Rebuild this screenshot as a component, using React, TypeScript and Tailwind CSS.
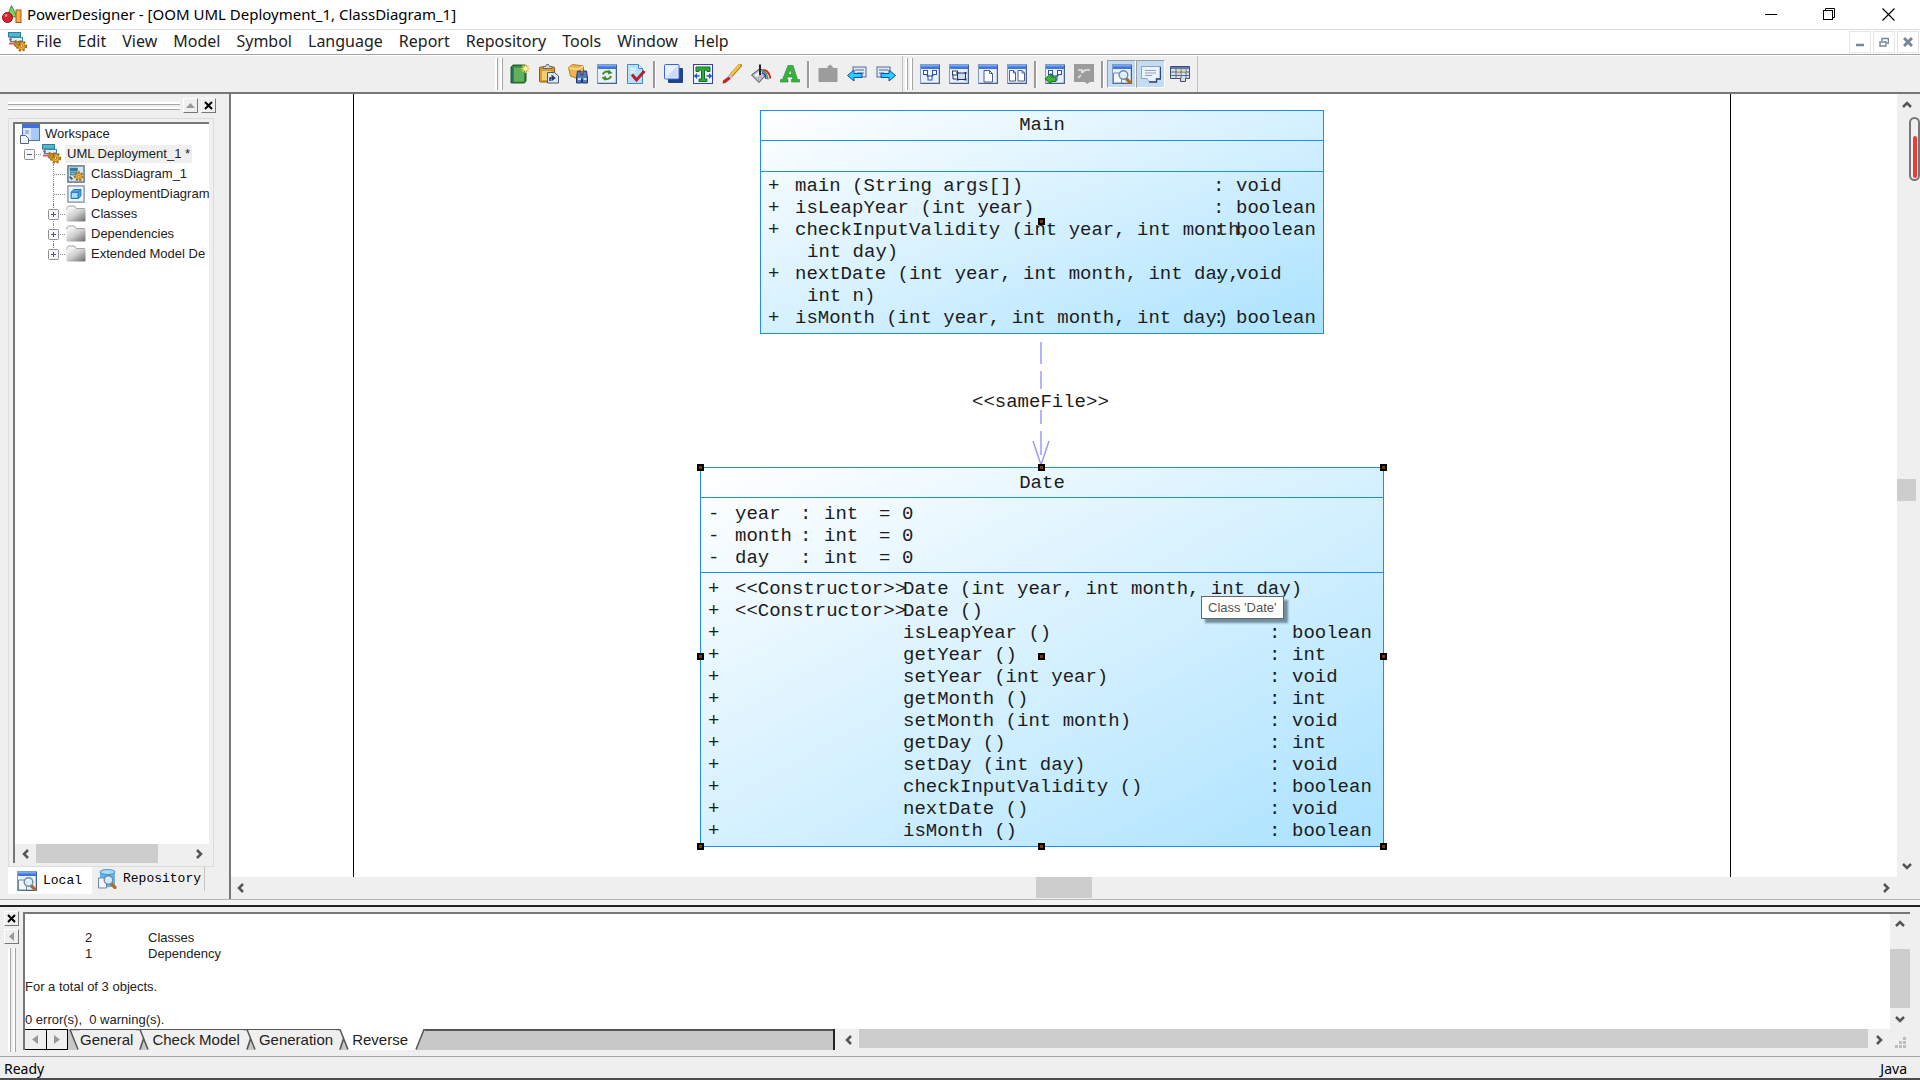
import type { ReactNode } from 'react';
import clsx from 'clsx';

/* ---------- icons ---------- */

function Svg({ size = 20, children }: { size?: number; children: ReactNode }) {
  return (
    <svg width={size} height={size} viewBox="0 0 20 20" className="shrink-0" aria-hidden="true">
      {children}
    </svg>
  );
}

function Win({ children }: { children?: ReactNode }) {
  return (
    <>
      <rect x="0.5" y="0.5" width="19" height="19" fill="#e8f1fb" stroke="#7f9cc9" />
      <path d="M19.5 1v18.5H1" fill="none" stroke="#46618f" strokeWidth="1.5" />
      <rect x="1" y="1" width="18" height="4" fill="#3f76e0" />
      <rect x="1" y="1" width="18" height="1.5" fill="#7ba6f2" />
      {children}
    </>
  );
}

const NODES = (
  <>
    <path d="M5.500 9l4 5M14.500 9l-4 5" stroke="#2d4fae" strokeWidth="1.500" fill="none" />
    <rect x="3.500" y="6.500" width="4" height="4" fill="#fff" stroke="#2d4fae" />
    <rect x="12.500" y="6.500" width="4" height="4" fill="#fff" stroke="#2d4fae" />
    <rect x="8" y="12" width="4" height="4" fill="#fff" stroke="#2d4fae" />
  </>
);

function LensShape() {
  return (
    <>
      <path d="M1.500 9h6l2 2v8h-8z" fill="#f4f8fd" stroke="#6d87ab" />
      <path d="M14 14.500l4 4" stroke="#b8691f" strokeWidth="3.200" strokeLinecap="round" />
      <circle cx="11.500" cy="11" r="4.300" fill="#dcefff" fillOpacity="0.9" stroke="#7489a8" strokeWidth="1.400" />
      <path d="M9.500 10a2.500 2.500 0 0 1 2-1.500" stroke="#fff" fill="none" />
    </>
  );
}

function GearShape({ cx, cy, r }: { cx: number; cy: number; r: number }) {
  return (
    <>
      <circle cx={cx} cy={cy} r={r} fill="none" stroke="#a86f12" strokeWidth="3" strokeDasharray="2 1.500" />
      <circle cx={cx} cy={cy} r={r - 0.5} fill="#f0b53c" stroke="#b97b18" />
      <circle cx={cx} cy={cy} r={r / 3} fill="#fdf6e0" stroke="#a86f12" />
    </>
  );
}

const icons: Record<string, ReactNode> = {
  app: (
    <>
      <path d="M9.500 0.5L15 12H5z" fill="#7ed06a" stroke="#3f8f35" />
      <circle cx="5.500" cy="12.500" r="5" fill="#d8232f" stroke="#8d1119" />
      <circle cx="4" cy="10.500" r="1.400" fill="#f58c90" />
      <rect x="14" y="5" width="5" height="12.500" fill="#f7b23b" stroke="#a3541c" />
    </>
  ),
  model: (
    <>
      <rect x="0.5" y="0.5" width="12" height="4.500" fill="#52b7cf" stroke="#2b7f99" />
      <rect x="2.500" y="5.500" width="12" height="4" fill="#d7f1f7" stroke="#3b8aa1" />
      <path d="M1 7.500h3M1 11.500h6" stroke="#d35a6c" strokeWidth="2" />
      <GearShape cx={13.5} cy={14} r={4.2} />
      <GearShape cx={9} cy={11.5} r={2.2} />
    </>
  ),
  newModel: (
    <>
      <path d="M1 3l2-2h13v16l-1.500 2H1z" fill="#33893a" stroke="#1c5a2a" />
      <path d="M4 3.500h10v14H4z" fill="#62b05b" />
      <path d="M2 3.500v15M15.500 4v14" stroke="#2a4f83" />
      <path d="M15.500 0v9M11 4.500h9M12.500 1.500l6 6M18.500 1.500l-6 6" stroke="#f6cf3f" strokeWidth="1.500" />
      <circle cx="15.500" cy="4.500" r="1.800" fill="#fff8c9" />
    </>
  ),
  paste: (
    <>
      <rect x="0.5" y="3" width="15" height="15" rx="1" fill="#d89b2c" stroke="#8a5c14" />
      <path d="M4 4.500V2.500h2.500l1-2h2l1 2H13v2z" fill="#d6d6d6" stroke="#666" />
      <path d="M3 7h9v9H3z" fill="#f1cd73" />
      <path d="M8.500 8.500h7l4 3.500v7h-11z" fill="#dce8f6" stroke="#44577d" />
      <path d="M11 17v-3h3.500M12.500 11.500l3 2.500-3 2.500" stroke="#1c2f6e" strokeWidth="1.500" fill="none" />
    </>
  ),
  find: (
    <>
      <path d="M0.5 3.500l4-3 11 1.500v8l-5 5-8-3z" fill="#f4b24a" stroke="#b87b1f" />
      <path d="M1 4l9 1.500 5.500-3.500" stroke="#fbdc9b" strokeWidth="1.500" fill="none" />
      <path d="M9.500 7h3.500v4h2V7h3.500l1 7v5h-5v-4h-1v4h-5v-5z" fill="#527cbd" stroke="#1e376c" />
      <path d="M10 15h3M15.500 15h3" stroke="#c7dcf7" strokeWidth="2" />
    </>
  ),
  refresh: (
    <Win>
      <path d="M6 10.500a4 3.500 0 0 1 6-2.500" stroke="#418d24" strokeWidth="2" fill="none" />
      <path d="M11.500 5.500l4 3.500-4.500 1.500z" fill="#418d24" />
      <path d="M14 12a4 3.500 0 0 1-6 2.500" stroke="#418d24" strokeWidth="2" fill="none" />
      <path d="M8.500 17l-4-3.500 4.500-1.500z" fill="#418d24" />
    </Win>
  ),
  check: (
    <>
      <path d="M1.500 0.5h11l4 4v15h-15z" fill="#b8e0fb" stroke="#3c8cc9" />
      <path d="M12.500 0.5v4h4" fill="#eaf6ff" stroke="#3c8cc9" />
      <path d="M4 5h6M4 8h5" stroke="#e5f5ff" strokeWidth="1.500" />
      <path d="M6 10.500l4.500 5.500L18.500 7" stroke="#b91f28" strokeWidth="3" fill="none" />
    </>
  ),
  shadow: (
    <>
      <rect x="4" y="4" width="15" height="15" rx="1" fill="#1d4589" />
      <rect x="0.5" y="0.5" width="14.500" height="14.500" rx="1" fill="#e8f0ff" stroke="#4062d6" />
      <path d="M2 13.500L13.500 2v11.500z" fill="#c9dafa" />
    </>
  ),
  textFrame: (
    <>
      <rect x="0.5" y="0.5" width="19" height="19" fill="#eef4ff" stroke="#3243b8" />
      <path d="M3 3h14v4.500h-3V6h-2.500v9H14v2.500H6V15h2.500V6H6v1.500H3z" fill="#2fae36" stroke="#176c23" />
      <path d="M1.500 12h5M13.500 12h5" stroke="#2450d8" strokeWidth="1.500" />
      <path d="M1 12l3-3v6zM19 12l-3-3v6z" fill="#2450d8" />
    </>
  ),
  brush: (
    <>
      <path d="M18 1.500L9 11.500" stroke="#b87a16" strokeWidth="4" strokeLinecap="round" />
      <path d="M17.500 1.500L9 11" stroke="#fbc53e" strokeWidth="2.500" strokeLinecap="round" />
      <path d="M9.500 11.500L7 14" stroke="#b9c1cc" strokeWidth="4" />
      <path d="M6.500 12.500l2 2.500-5 4-3 .5.500-3z" fill="#c3232a" />
    </>
  ),
  bucket: (
    <>
      <path d="M0.500 11L9 4.500l7 5.500-8 8.500z" fill="#b9bdc2" stroke="#4b4f55" />
      <path d="M3.500 11L9 7l2 1.500-6 5z" fill="#f7f8fa" />
      <path d="M9 11V0.5" stroke="#222" strokeWidth="2" />
      <path d="M11 6.500c4-1 7 1 8.500 8" stroke="#e02222" strokeWidth="2" fill="none" />
      <path d="M11 7.500c3-1 5 2 6 8" stroke="#28b13c" strokeWidth="1.500" fill="none" />
      <path d="M11 9c2 0 3.500 2 4 6" stroke="#2b36e0" strokeWidth="1.500" fill="none" />
    </>
  ),
  font: (
    <path
      d="M8 1.500h5l4.500 14h2V18h-8v-2.500h1.500l-.7-2.500H7.500l-.8 2.500H8V18H.5v-2.500h2zM10.200 5l-1.700 5.500h3.200z"
      fill="#35b33c"
      stroke="#1f8129"
      strokeWidth="0.6"
    />
  ),
  greyBlock: <path d="M0.500 4h9V2.500l3-2 3 3.500h4v14H.5z" fill="#9c9c9c" />,
  prev: (
    <>
      <rect x="6" y="3" width="13" height="10" fill="#dfe9f7" stroke="#536d9c" />
      <path d="M8 6h9M10 9h7" stroke="#536d9c" />
      <path d="M.5 11.500L7 6v3.500h8v4H7V17z" fill="#22d3f5" stroke="#1546b5" />
    </>
  ),
  next: (
    <>
      <rect x="1" y="3" width="13" height="10" fill="#dfe9f7" stroke="#536d9c" />
      <path d="M3 6h9M3 9h5" stroke="#536d9c" />
      <path d="M19.500 11.500L13 6v3.500H5v4h8V17z" fill="#22d3f5" stroke="#1546b5" />
    </>
  ),
  diagram: <Win>{NODES}</Win>,
  diagramSel: (
    <Win>
      <rect x="3.500" y="7" width="5" height="4" fill="#fff" stroke="#26345f" />
      <rect x="8.500" y="9" width="8" height="6.500" fill="#cfdcf2" stroke="#26345f" />
      <path d="M7.500 8h2v2h-2zM15.500 8h2v2h-2zM7.500 14.500h2v2h-2zM15.500 14.500h2v2h-2z" fill="#26345f" />
      <path d="M4 11v4h3" stroke="#26345f" fill="none" />
    </Win>
  ),
  page: (
    <Win>
      <path d="M6 6.500h5.500l3 3V18H6z" fill="#fff" stroke="#4d5f80" />
      <path d="M11.500 6.500v3h3" fill="none" stroke="#4d5f80" />
    </Win>
  ),
  pages: (
    <Win>
      <path d="M2.500 6.500h4l2 2.500v8h-6zM11 6.500h4l2.500 2.500v8H11z" fill="#fff" stroke="#4d5f80" />
      <path d="M6.500 6.500V9h2M15 6.500V9h2.500" fill="none" stroke="#4d5f80" />
    </Win>
  ),
  importDiagram: (
    <Win>
      {NODES}
      <path d="M0 15l6-5.500V13h5v4.500H6V20z" fill="#3eb53a" stroke="#1b6e22" />
    </Win>
  ),
  greyDiagram: (
    <>
      <path d="M0 0h20v18h-4l-3 2-2-2H0z" fill="#9c9c9c" />
      <path d="M4 6h4v3M8 9l3-3M11 6h5M4 14l3-3" stroke="#e8e8e8" strokeWidth="1.500" fill="none" />
    </>
  ),
  browser: (
    <Win>
      <LensShape />
    </Win>
  ),
  output: (
    <>
      <path d="M0.500 2.500h19v12h-4v3H8l-2-3H.5z" fill="#eaf3fd" stroke="#8ba3c9" />
      <path d="M19.500 3v12h-4v3H8" fill="none" stroke="#33496f" strokeWidth="1.500" />
      <path d="M4 6.500h11M4 9h11M4 11.500h7" stroke="#8fa2c0" />
    </>
  ),
  result: (
    <>
      <path d="M0.500 2.500h19v12h-4v3h-5v-3h-10z" fill="#d6dfee" stroke="#414e68" />
      <rect x="1" y="3" width="18" height="2" fill="#5a7bbd" />
      <path d="M1 8h18M1 11.500h18M6 5v10M11 5v10M16 5v10" stroke="#5d6c8a" />
      <path d="M7 6.500h3.500M12 6.500h3.500M7 10h3.500" stroke="#f1d78e" strokeWidth="2" />
    </>
  ),
  workspace: (
    <>
      <rect x="2.500" y="0.5" width="17" height="16" fill="#dbe8fb" stroke="#4673c9" />
      <rect x="3" y="1" width="16" height="3" fill="#3a6fe0" />
      <rect x="11" y="4" width="8" height="12" fill="#a8c8f5" />
      <path d="M5 7h4M5 9h4" stroke="#6f8cb8" />
      <path d="M0.500 11.500h5l3 3v5h-8z" fill="#f3f7fc" stroke="#52647f" />
    </>
  ),
  classDiagram: (
    <>
      <rect x="1" y="1" width="18" height="18" fill="#cfe4f4" stroke="#586a7c" strokeWidth="1.500" />
      <rect x="3" y="3" width="9" height="4" fill="#2b7f99" />
      <rect x="4" y="8" width="7" height="3" fill="#7fc2d6" stroke="#2b6f87" />
      <GearShape cx={13} cy={12.5} r={4} />
      <path d="M3 13l3 3" stroke="#43566b" strokeWidth="2" />
    </>
  ),
  deployment: (
    <>
      <rect x="1" y="1" width="18" height="18" fill="#eef6fd" stroke="#8494a5" strokeWidth="1.500" />
      <path d="M4.500 8l3-3h8v7l-3 3h-8z" fill="#52a8ea" stroke="#1c6fb8" />
      <path d="M4.500 8h8v7M12.500 8l3-3" fill="none" stroke="#1c6fb8" />
      <rect x="5.500" y="9" width="6" height="5" fill="#b4ddfb" />
    </>
  ),
  repository: (
    <>
      <path d="M3 3v13c0 3 15 3 15 0V3z" fill="#5fb4ea" />
      <ellipse cx="10.500" cy="3" rx="7.500" ry="2.500" fill="#a7dbfa" stroke="#3d8fc8" />
      <LensShape />
    </>
  ),
};

function FolderIcon() {
  return (
    <Svg>
      <defs>
        <linearGradient id="folder" x1="0" y1="0" x2="1" y2="1">
          <stop offset="0" stopColor="#fafafa" />
          <stop offset="0.450" stopColor="#cfcfcf" />
          <stop offset="1" stopColor="#6a6a6a" />
        </linearGradient>
      </defs>
      <path d="M1 6V3.500l1.500-1.500h6L10 4.500h9" fill="#f2f2f2" stroke="#a5a5a5" />
      <rect x="0.5" y="5" width="19" height="12.500" rx="1" fill="url(#folder)" />
    </Svg>
  );
}

const ARROWS = {
  up: 'M2 8l4-4 4 4',
  down: 'M2 4l4 4 4-4',
  left: 'M8 2L4 6l4 4',
  right: 'M4 2l4 4-4 4',
};

function ArrowButton({ dir, className }: { dir: keyof typeof ARROWS; className: string }) {
  return (
    <button type="button" aria-label={`Scroll ${dir}`} className={clsx('flex shrink-0 items-center justify-center', className)}>
      <svg width="12" height="12" viewBox="0 0 12 12" aria-hidden="true">
        <path d={ARROWS[dir]} fill="none" stroke="#555" strokeWidth="2.500" />
      </svg>
    </button>
  );
}

/* ---------- top bars ---------- */

const MENUS = ['File', 'Edit', 'View', 'Model', 'Symbol', 'Language', 'Report', 'Repository', 'Tools', 'Window', 'Help'];

function TitleBar() {
  return (
    <header className="flex h-[29px] shrink-0 items-center bg-white px-[2px]">
      <Svg>{icons.app}</Svg>
      <h1 className="ml-[5px] flex-1 font-['Noto_Sans'] text-[15px]">PowerDesigner - [OOM UML Deployment_1, ClassDiagram_1]</h1>
      <div className="flex">
        <button type="button" aria-label="Minimize" className="flex h-[29px] w-[58px] items-center justify-center">
          <svg width="13" height="13"><path d="M0 6.500h12" stroke="#000" /></svg>
        </button>
        <button type="button" aria-label="Restore" className="flex h-[29px] w-[58px] items-center justify-center">
          <svg width="13" height="13" fill="none" stroke="#000">
            <rect x="0.5" y="2.500" width="9" height="9" />
            <path d="M2.500 2.500v-2h9v9h-2" />
          </svg>
        </button>
        <button type="button" aria-label="Close" className="flex h-[29px] w-[60px] items-center justify-center">
          <svg width="13" height="13"><path d="M0.500 0.500l12 12M12.500 0.500l-12 12" stroke="#000" strokeWidth="1.200" /></svg>
        </button>
      </div>
    </header>
  );
}

function MenuBar() {
  const box = 'flex h-[22px] w-[22px] items-center justify-center border border-[#e6e6e6]';
  return (
    <nav className="flex h-[26px] shrink-0 items-center border-y border-t-[#dedede] border-b-[#a3a3a3] bg-white pr-[1px] pl-[8px]">
      <Svg>{icons.model}</Svg>
      {MENUS.map((m) => (
        <button key={m} type="button" className="px-[8px] pb-[2px] font-['Noto_Sans'] text-[16px] leading-[22px] text-[#222]">
          {m}
        </button>
      ))}
      <div className="ml-auto flex gap-[2px]">
        <button type="button" aria-label="Minimize diagram" className={box}>
          <svg width="10" height="10"><path d="M1 8h8" stroke="#76879a" strokeWidth="2.500" /></svg>
        </button>
        <button type="button" aria-label="Restore diagram" className={box}>
          <svg width="10" height="10" fill="none" stroke="#76879a" strokeWidth="1.500">
            <rect x="1" y="5" width="6" height="4" />
            <path d="M3 4V1.500h6.500V6H8" />
          </svg>
        </button>
        <button type="button" aria-label="Close diagram" className={box}>
          <svg width="10" height="10"><path d="M1 1l8 8M9 1L1 9" stroke="#76879a" strokeWidth="3" /></svg>
        </button>
      </div>
    </nav>
  );
}

function Grip() {
  return (
    <span className="flex gap-[2px] px-[2px]">
      <span className="h-[32px] w-[3px] border-r border-[#a6a6a6] bg-white" />
      <span className="h-[32px] w-[3px] border-r border-[#a6a6a6] bg-white" />
    </span>
  );
}

function ToolGroup({ items }: { items: [string, string][] }) {
  return (
    <div className="flex">
      {items.map(([icon, label]) => {
        const on = icon === 'browser' || icon === 'output';
        return (
          <button
            key={icon}
            type="button"
            aria-label={label}
            className={clsx(
              'flex h-[28px] w-[29px] items-center justify-center border',
              on ? 'border-t-[#9b9b9b] border-r-white border-b-white border-l-[#9b9b9b] bg-[#c3dcf2]' : 'border-transparent',
            )}
          >
            <Svg>{icons[icon]}</Svg>
          </button>
        );
      })}
    </div>
  );
}

function Sep() {
  return <span className="mx-[3px] h-[27px] w-[3px] border-r border-white bg-[#9a9a9a]" />;
}

function Toolbar() {
  return (
    <div className="flex h-[37px] shrink-0 items-center border-t border-white bg-[#efefef] pl-[493px]">
      <Grip />
      <ToolGroup
        items={[['newModel', 'New'], ['paste', 'Paste as Shortcut'], ['find', 'Find Objects'], ['refresh', 'Redisplay'], ['check', 'Check Model']]}
      />
      <Sep />
      <ToolGroup
        items={[['shadow', 'Shadow'], ['textFrame', 'Adjust to Text'], ['brush', 'Line Style'], ['bucket', 'Fill'], ['font', 'Font']]}
      />
      <Sep />
      <ToolGroup items={[['greyBlock', 'Up'], ['prev', 'Previous Diagram'], ['next', 'Next Diagram']]} />
      <span className="ml-[2px] h-[36px] w-px bg-[#c2c2c2]" />
      <Grip />
      <ToolGroup items={[['diagram', 'Global View'], ['diagramSel', 'View Selection'], ['page', 'View Page'], ['pages', 'View Pages']]} />
      <Sep />
      <ToolGroup items={[['importDiagram', 'Previous View'], ['greyDiagram', 'Next View']]} />
      <Sep />
      <ToolGroup items={[['browser', 'Browser'], ['output', 'Output'], ['result', 'Result List']]} />
      <span className="ml-[3px] h-[36px] w-px bg-[#c2c2c2]" />
    </div>
  );
}

/* ---------- browser panel ---------- */

const TREE: { label: string; icon: ReactNode; depth: number; box?: string; active?: boolean }[] = [
  { label: 'Workspace', icon: <Svg>{icons.workspace}</Svg>, depth: 0 },
  { label: 'UML Deployment_1 *', icon: <Svg>{icons.model}</Svg>, depth: 1, box: '-', active: true },
  { label: 'ClassDiagram_1', icon: <Svg size={18}>{icons.classDiagram}</Svg>, depth: 2 },
  { label: 'DeploymentDiagram', icon: <Svg size={18}>{icons.deployment}</Svg>, depth: 2 },
  { label: 'Classes', icon: <FolderIcon />, depth: 2, box: '+' },
  { label: 'Dependencies', icon: <FolderIcon />, depth: 2, box: '+' },
  { label: 'Extended Model De', icon: <FolderIcon />, depth: 2, box: '+' },
];

function ExpandBox({ sign }: { sign: string }) {
  return (
    <svg width="11" height="11" viewBox="0 0 11 11" className="relative shrink-0" aria-hidden="true">
      <rect x="0.5" y="0.5" width="10" height="10" rx="1" fill="#f7f7f7" stroke="#8f8f8f" />
      <path d={sign === '+' ? 'M3 5.500h5M5.500 3v5' : 'M3 5.500h5'} stroke="#3e5aa8" />
    </svg>
  );
}

function TreeRow({ node, last }: { node: (typeof TREE)[number]; last: boolean }) {
  return (
    <li className="flex h-[20px] items-center whitespace-nowrap">
      {node.depth > 0 && (
        <span className={clsx('relative flex h-full w-[17px] shrink-0 items-center', node.depth === 1 ? 'ml-[5px]' : 'ml-[29px]')}>
          {node.depth === 2 && (
            <span className={clsx('absolute top-0 left-[5px] border-l border-dotted border-[#8a8a8a]', last ? 'h-[10px]' : 'h-full')} />
          )}
          <span className="absolute top-[10px] right-0 left-[6px] border-t border-dotted border-[#8a8a8a]" />
          {node.box && <ExpandBox sign={node.box} />}
        </span>
      )}
      <span className="flex w-[21px] shrink-0 justify-center">{node.icon}</span>
      <a href="#" className={clsx('ml-[3px] px-[2px] leading-[18px]', node.active && 'bg-[#efefef]')}>
        {node.label}
      </a>
    </li>
  );
}

const smallButton =
  'flex h-[15px] w-[15px] items-center justify-center border border-t-white border-l-white border-r-[#777] border-b-[#777] bg-[#efefef]';

function CloseGlyph() {
  return <svg width="9" height="9"><path d="M1 1l7 7M8 1L1 8" stroke="#000" strokeWidth="2" /></svg>;
}

function Browser() {
  return (
    <aside className="flex w-[229px] shrink-0 flex-col bg-[#efefef] pb-[5px]">
      <div className="mt-[4px] flex h-[15px] items-center pl-[8px]">
        <span className="flex w-[172px] flex-col gap-[2px]">
          <span className="h-[3px] border-b border-[#a6a6a6] bg-white" />
          <span className="h-[3px] border-b border-[#a6a6a6] bg-white" />
        </span>
        <button type="button" aria-label="Collapse" className={clsx('ml-[3px]', smallButton)}>
          <svg width="9" height="5"><path d="M0 5l4.500-5L9 5z" fill="#999" /></svg>
        </button>
        <button type="button" aria-label="Close browser" className={clsx('ml-[3px]', smallButton)}>
          <CloseGlyph />
        </button>
      </div>
      <div className="mt-[5px] mr-[15px] ml-[8px] flex min-h-0 flex-1 flex-col border border-[#dcdcdc] px-[4px] py-[3px]">
        <div className="flex min-h-0 flex-1 flex-col border-t-2 border-l-2 border-[#777] bg-white">
          <ul className="min-h-0 flex-1 overflow-hidden pl-[4px] font-['Liberation_Sans'] text-[13px] text-[#222]">
            {TREE.map((n, i) => (
              <TreeRow key={n.label} node={n} last={i === TREE.length - 1} />
            ))}
          </ul>
          <div className="flex h-[19px] bg-[#efefef]">
            <ArrowButton dir="left" className="w-[21px]" />
            <span className="flex-1">
              <span className="block h-full w-4/5 bg-[#cdcdcd]" />
            </span>
            <ArrowButton dir="right" className="w-[21px]" />
          </div>
        </div>
      </div>
      <div className="ml-[8px] flex h-[27px] font-['Liberation_Mono'] text-[13px] text-black" role="tablist">
        <button type="button" role="tab" aria-selected="true" className="flex w-[84px] items-center gap-[6px] bg-white pl-[9px]">
          <Svg>{icons.browser}</Svg>
          Local
        </button>
        <button type="button" role="tab" aria-selected="false" className="mb-[3px] flex w-[113px] items-center gap-[6px] border-r border-[#c4c4c4] pl-[5px]">
          <Svg>{icons.repository}</Svg>
          Repository
        </button>
      </div>
    </aside>
  );
}

/* ---------- diagram ---------- */

type Operation = { stereotype?: string; name: string; rest?: string; type?: string };

const MAIN_OPS: Operation[] = [
  { name: 'main (String args[])', type: 'void' },
  { name: 'isLeapYear (int year)', type: 'boolean' },
  { name: 'checkInputValidity (int year, int month,', rest: 'int day)', type: 'boolean' },
  { name: 'nextDate (int year, int month, int day,', rest: 'int n)', type: 'void' },
  { name: 'isMonth (int year, int month, int day)', type: 'boolean' },
];

const DATE_ATTRS = ['year', 'month', 'day'];

const DATE_OPS: Operation[] = [
  { stereotype: '<<Constructor>>', name: 'Date (int year, int month, int day)' },
  { stereotype: '<<Constructor>>', name: 'Date ()' },
  { name: 'isLeapYear ()', type: 'boolean' },
  { name: 'getYear ()', type: 'int' },
  { name: 'setYear (int year)', type: 'void' },
  { name: 'getMonth ()', type: 'int' },
  { name: 'setMonth (int month)', type: 'void' },
  { name: 'getDay ()', type: 'int' },
  { name: 'setDay (int day)', type: 'void' },
  { name: 'checkInputValidity ()', type: 'boolean' },
  { name: 'nextDate ()', type: 'void' },
  { name: 'isMonth ()', type: 'boolean' },
];

const classBox = 'absolute border border-[#1e8cf5] bg-linear-to-br from-white to-[#aae2ff] whitespace-pre';

function Handle({ className }: { className: string }) {
  return (
    <span className={clsx('absolute flex h-[7px] w-[7px] items-center justify-center bg-black', className)}>
      <span className="h-[3px] w-[3px] bg-[#7a3a00]" />
    </span>
  );
}

function MainClass() {
  return (
    <section className={clsx(classBox, 'top-[16px] left-[529px] w-[564px]')}>
      <h2 className="h-[29px] text-center leading-[29px]">Main</h2>
      <div className="h-[32px] border-y border-[#1e8cf5]" />
      <div className="pt-[3px] pb-[4px]">
        {MAIN_OPS.map((op) => (
          <div key={op.name} className="grid grid-cols-[27px_418px_23px_1fr] pl-[7px]">
            <span>+</span>
            <span className="w-0">
              {op.name}
              {op.rest && <span className="block pl-[12px]">{op.rest}</span>}
            </span>
            <span>:</span>
            <span>{op.type}</span>
          </div>
        ))}
      </div>
      <Handle className="top-[107px] left-[277px]" />
    </section>
  );
}

function DateClass() {
  return (
    <section className={clsx(classBox, 'top-[373px] left-[469px] w-[684px]')}>
      <h2 className="h-[29px] text-center leading-[31px]">Date</h2>
      <div className="h-[76px] border-y border-[#1e8cf5] pt-[5px]">
        {DATE_ATTRS.map((a) => (
          <div key={a} className="grid grid-cols-[27px_65px_24px_55px_23px_1fr] pl-[7px]">
            <span>-</span>
            <span>{a}</span>
            <span>:</span>
            <span>int</span>
            <span>=</span>
            <span>0</span>
          </div>
        ))}
      </div>
      <div className="pt-[5px] pb-[4px]">
        {DATE_OPS.map((op) => (
          <div key={op.name} className="grid grid-cols-[27px_168px_366px_23px_1fr] pl-[7px]">
            <span>+</span>
            <span className="w-0">{op.stereotype}</span>
            <span className="w-0">{op.name}</span>
            <span>{op.type && ':'}</span>
            <span>{op.type}</span>
          </div>
        ))}
      </div>
      <Handle className="-top-[4px] -left-[4px]" />
      <Handle className="-top-[4px] left-[337px]" />
      <Handle className="-top-[4px] -right-[4px]" />
      <Handle className="top-[185px] -left-[4px]" />
      <Handle className="top-[185px] left-[337px]" />
      <Handle className="top-[185px] -right-[4px]" />
      <Handle className="-bottom-[4px] -left-[4px]" />
      <Handle className="-bottom-[4px] left-[337px]" />
      <Handle className="-right-[4px] -bottom-[4px]" />
    </section>
  );
}

function Canvas() {
  return (
    <main className="relative flex min-w-0 flex-1 flex-col border-l-2 border-[#777] bg-[#efefef] pb-[1px]">
      <div className="flex min-h-0 flex-1">
        <div className="relative min-w-0 flex-1 overflow-hidden bg-white font-['Liberation_Mono'] text-[19px] leading-[22px] text-[#1c1c1c]">
          <div className="absolute inset-y-0 left-[122px] w-[1378px] border-x border-black" />
          <MainClass />
          <svg width="20" height="128" className="absolute top-[246px] left-[800px]" fill="none" stroke="#9a9aff" strokeWidth="1.500">
            <path d="M10 2v22M10 31v18M10 70v14M10 91v24M2 101l8 24 8-24" />
          </svg>
          <span className="absolute top-[297px] left-[741px]">{'<<sameFile>>'}</span>
          <DateClass />
          <div
            role="tooltip"
            className="absolute top-[502px] left-[970px] border border-[#666] bg-white px-[6px] font-['Liberation_Sans'] text-[13px] leading-[21px] text-[#555] shadow-[4px_4px_2px_#6f8fa0]"
          >
            Class 'Date'
          </div>
        </div>
        <div className="flex w-[23px] flex-col bg-[#efefef] pr-[4px]">
          <ArrowButton dir="up" className="h-[22px]" />
          <span className="flex flex-1 flex-col pt-[363px]">
            <span className="h-[22px] bg-[#cdcdcd]" />
          </span>
          <ArrowButton dir="down" className="h-[22px]" />
        </div>
      </div>
      <div className="flex h-[21px] pr-[24px]">
        <ArrowButton dir="left" className="w-[20px]" />
        <span className="flex flex-1 justify-center">
          <span className="w-[56px] bg-[#cdcdcd]" />
        </span>
        <ArrowButton dir="right" className="w-[20px]" />
      </div>
      {/* load indicator floating over the scroll bar */}
      <div className="absolute top-[23px] right-0 flex h-[64px] w-[11px] items-end justify-center rounded-full border-2 border-[#777] bg-[#efefef] pb-px">
        <span className="h-[42px] w-[4px] rounded-full bg-[#f03a3a]" />
      </div>
    </main>
  );
}

/* ---------- output panel ---------- */

const OUTPUT_TABS = ['General', 'Check Model', 'Generation', 'Reverse'];

function Slant({ left, right }: { left: string; right: string }) {
  return (
    <svg width="16" height="21" viewBox="0 0 16 21" className="shrink-0" aria-hidden="true">
      <path d="M0 0h9L3 21H0z" fill={left} />
      <path d="M3 0h13v21h-4L5 0z" fill={right} />
      <path d="M4 20h7l-3.500-11z" fill="#c8c8c8" />
      <path d="M4 0.500l8 20M7.500 10L4 20.500M0 0.500h4" fill="none" stroke="#555" strokeWidth="1.500" />
      {left === right && <path d="M4 0.500h12" stroke="#555" />}
    </svg>
  );
}

function OutputTabs() {
  return (
    <div className="flex h-[21px] w-[810px] shrink-0 border-r-2 border-[#222] bg-[#c8c8c8] font-['Liberation_Sans'] text-[15px] text-[#222]">
      <div className="flex w-[43px] border-t border-r border-b border-black">
        <button type="button" aria-label="Previous tab" className="flex flex-1 items-center justify-center border-r border-black bg-[#efefef]">
          <svg width="6" height="9"><path d="M6 0v9L0 4.500z" fill="#999" /></svg>
        </button>
        <button type="button" aria-label="Next tab" className="flex flex-1 items-center justify-center bg-[#efefef]">
          <svg width="6" height="9"><path d="M0 0v9l6-4.500z" fill="#999" /></svg>
        </button>
      </div>
      <svg width="12" height="21" className="shrink-0" aria-hidden="true">
        <path d="M2 0h10v21H9z" fill="#efefef" />
        <path d="M2 0.500l8 20M2 0.500h10" fill="none" stroke="#555" strokeWidth="1.500" />
      </svg>
      {OUTPUT_TABS.map((t, i) => {
        const last = i === OUTPUT_TABS.length - 1;
        return (
          <div key={t} className="flex" role="presentation">
            <button
              type="button"
              className={clsx('pr-[3px] leading-[20px]', last ? 'bg-white' : 'border-t border-[#555] bg-[#efefef]')}
            >
              {t}
            </button>
            {!last && <Slant left="#efefef" right={i === 2 ? '#fff' : '#efefef'} />}
          </div>
        );
      })}
      <svg width="14" height="21" className="shrink-0" aria-hidden="true">
        <path d="M0 0h13L5 21H0z" fill="#fff" />
        <path d="M14 0.500h-1L5 20.500" fill="none" stroke="#555" strokeWidth="1.500" />
      </svg>
      <span className="flex-1 border-t-2 border-[#555]" />
    </div>
  );
}

function Output() {
  return (
    <section className="flex h-[151px] shrink-0 border-t-2 border-[#222] bg-[#efefef]">
      <div className="flex w-[23px] shrink-0 flex-col items-center pt-[4px]">
        <button type="button" aria-label="Close output" className={smallButton}>
          <CloseGlyph />
        </button>
        <button type="button" aria-label="Collapse output" className={clsx('mt-[3px]', smallButton)}>
          <svg width="5" height="9"><path d="M5 0v9L0 4.500z" fill="#999" /></svg>
        </button>
        <span className="mt-[4px] mb-[4px] flex flex-1 gap-[2px]">
          <span className="w-[3px] border-r border-[#a6a6a6] bg-white" />
          <span className="w-[3px] border-r border-[#a6a6a6] bg-white" />
        </span>
      </div>
      <div className="mt-[5px] mr-[10px] mb-[6px] flex min-w-0 flex-1 flex-col border-t-2 border-l-2 border-[#777] bg-white">
        <div className="flex min-h-0 flex-1">
          <div className="flex-1 overflow-hidden pt-[16px] font-['Liberation_Sans'] text-[13px] leading-[16px] text-[#222]">
            <div className="grid grid-cols-[63px_1fr] pl-[60px]">
              <span>2</span>
              <span>Classes</span>
              <span>1</span>
              <span>Dependency</span>
            </div>
            <p className="mt-[17px]">For a total of 3 objects.</p>
            <p className="mt-[17px] whitespace-pre">0 error(s),  0 warning(s).</p>
          </div>
          <div className="flex w-[20px] flex-col bg-[#efefef]">
            <ArrowButton dir="up" className="h-[20px]" />
            <span className="flex flex-1 flex-col justify-end">
              <span className="h-[59px] bg-[#cdcdcd]" />
            </span>
            <ArrowButton dir="down" className="h-[21px]" />
          </div>
        </div>
        <div className="flex h-[21px] bg-[#efefef]">
          <OutputTabs />
          <ArrowButton dir="left" className="ml-[4px] w-[20px]" />
          <span className="h-[19px] flex-1 bg-[#cdcdcd]" />
          <ArrowButton dir="right" className="w-[22px]" />
          <svg width="20" height="20" viewBox="0 0 20 20" fill="#bdbdbd" aria-hidden="true">
            <path d="M13 8h3v3h-3zM9 12h3v3H9zM13 12h3v3h-3zM5 16h3v3H5zM9 16h3v3H9zM13 16h3v3h-3z" />
          </svg>
        </div>
      </div>
    </section>
  );
}

export default function App() {
  return (
    <div className="flex h-screen flex-col overflow-hidden bg-[#efefef] text-black">
      <TitleBar />
      <MenuBar />
      <Toolbar />
      <div className="flex min-h-0 flex-1 border-t-2 border-[#777]">
        <Browser />
        <Canvas />
      </div>
      <div className="h-[6px] shrink-0 border-t border-[#b5b5b5] bg-[#f4f4f4]" />
      <Output />
      <footer className="flex h-[24px] shrink-0 items-center justify-between border-t border-b-2 border-t-[#a3a3a3] border-b-[#4d4d4d] pt-[3px] pr-[13px] pl-[4px] font-['Noto_Sans'] text-[14px] leading-[18px]">
        <span>Ready</span>
        <span>Java</span>
      </footer>
    </div>
  );
}
